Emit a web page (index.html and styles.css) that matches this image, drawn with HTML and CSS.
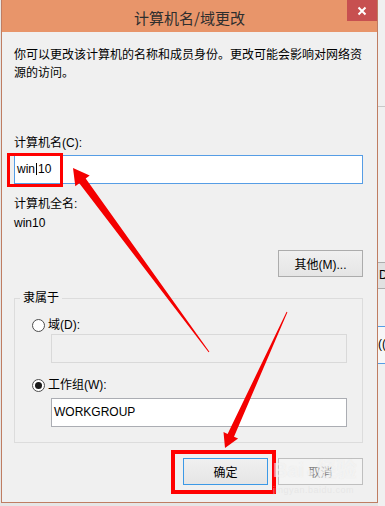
FILE: index.html
```html
<!DOCTYPE html>
<html lang="zh-CN">
<head>
    <meta charset="UTF-8">
    <title>计算机名/域更改</title>
    <link rel="stylesheet" href="styles.css">
</head>
<body>
    <div class="screen">
        <div class="window">
            <div class="titlebar">
                <div class="title">计算机名/域更改</div>
                <button class="close">
                    <svg width="10" height="10" viewBox="0 0 10 10">
                        <path d="M1.5 1.5 L8.5 8.5 M8.5 1.5 L1.5 8.5" stroke="#fff" stroke-width="2" fill="none"/>
                    </svg>
                </button>
            </div>

            <div class="content">
                <p class="intro">你可以更改该计算机的名称和成员身份。更改可能会影响对网络资源的访问。</p>

                <div class="label label-name">计算机名(C):</div>
                <div class="field focused">win<span class="caret"></span>10</div>

                <div class="label label-full">计算机全名:</div>
                <div class="value">win10</div>

                <div class="row-right">
                    <button class="btn">其他(M)...</button>
                </div>

                <fieldset class="group">
                    <legend>隶属于</legend>
                    <div class="radio radio-domain"><span class="dot"></span>域(D):</div>
                    <div class="field disabled"></div>
                    <div class="radio radio-work"><span class="dot checked"></span>工作组(W):</div>
                    <div class="field work">WORKGROUP</div>
                </fieldset>

                <div class="actions">
                    <button class="btn default">确定</button>
                    <button class="btn" disabled>取消</button>
                </div>
            </div>
        </div>

        <div class="side">
            <div class="side-top"></div>
            <div class="side-line"></div>
            <div class="side-gap"></div>
            <div class="side-tab">D</div>
            <div class="side-gap2"></div>
            <div class="side-field">((</div>
        </div>

        <!-- annotations drawn over the dialog -->
        <div class="mark mark-name"></div>
        <div class="mark mark-ok"></div>
        <svg class="arrows" width="385" height="506" viewBox="0 0 385 506">
            <polygon fill="#f40000" points="73,168 89.7,175.6 85.7,178.5 209.4,351.7 208.6,352.3 79.3,183.3 75.3,186.2"/>
            <polygon fill="#f40000" points="225,448 238.1,438.6 234,436.8 287.4,312.2 286.6,311.8 227.6,433.9 223.5,432"/>
        </svg>
        <div class="watermark">
            <div class="wm-logo">Bai<span class="wm-paw">&#9679;</span>经验</div>
            <div class="wm-url">jingyan.baidu.com</div>
        </div>
    </div>
</body>
</html>
```

FILE: styles.css
```css
body {
    margin: 0;
    background: #e6e6e6;
    font-family: "Liberation Sans", "Noto Sans CJK SC", sans-serif;
    font-size: 12px;
    color: #000;
}

.screen {
    position: relative;
    display: flex;
    align-items: flex-start;
    width: 385px;
    height: 506px;
    overflow: hidden;
}

.window {
    margin-left: 1px;
    width: 377px;
    height: 503px;
    box-sizing: border-box;
    border: 1px solid #bf7d62;
    border-top: 0;
    background: #f0f0f0;
    display: flex;
    flex-direction: column;
}

.titlebar {
    height: 32px;
    flex-shrink: 0;
    background: #e8956a;
    display: grid;
    grid-template-columns: 30px 1fr 30px;
}

.title {
    grid-column: 2;
    text-align: center;
    font-family: "Noto Sans CJK SC", sans-serif;
    font-size: 15px;
    line-height: 30px;
    padding-top: 3px;
    color: #2e2e2e;
}

.close {
    grid-column: 3;
    height: 21px;
    border: 0;
    padding: 0;
    background: #c75050;
    display: flex;
    align-items: center;
    justify-content: center;
}

.content {
    padding: 14px 14px 0 12px;
}

.intro {
    margin: 0;
    line-height: 18px;
}

.label {
    line-height: 18px;
}

.label-name {
    margin-top: 52px;
}

.label-full {
    margin-top: 11px;
}

.value {
    margin-top: 1px;
    line-height: 18px;
}

.field {
    height: 29px;
    box-sizing: border-box;
    border: 1px solid #abadb3;
    background: #fff;
    padding-left: 2px;
    line-height: 27px;
}

.field.focused {
    margin-top: 3px;
    border-color: #569de5;
}

.caret {
    display: inline-block;
    width: 1px;
    height: 12px;
    background: #000;
    vertical-align: -2px;
    margin: 0 1px 0 1px;
}

.row-right {
    margin-top: 18px;
    display: flex;
    justify-content: flex-end;
}

.btn {
    width: 85px;
    height: 27px;
    padding: 0;
    font: inherit;
    color: #000;
    border: 1px solid #acacac;
    background: linear-gradient(#f0f0f0, #e5e5e5);
}

.btn.default {
    border-color: #3c99e6;
}

.btn:disabled {
    color: #838383;
    border-color: #bfbfbf;
    background: #f4f4f4;
}

.group {
    margin: 12px 0 0 0;
    padding: 0 0 15px 0;
    border: 1px solid #dcdcdc;
    min-width: 0;
}

.group legend {
    margin-left: 5px;
    padding: 0 3px;
    line-height: 18px;
}

.radio {
    display: flex;
    align-items: center;
    padding-left: 17px;
    line-height: 18px;
}

.radio-domain {
    margin-top: 9px;
}

.radio-work {
    margin-top: 13px;
}

.dot {
    width: 13px;
    height: 13px;
    box-sizing: border-box;
    border: 1px solid #4d4d4d;
    border-radius: 50%;
    background: #fff;
    margin-right: 3px;
    display: flex;
    align-items: center;
    justify-content: center;
}

.dot.checked::after {
    content: "";
    width: 7px;
    height: 7px;
    border-radius: 50%;
    background: #1a1a1a;
}

.group .field {
    margin-left: 36px;
    width: 296px;
}

.field.disabled {
    background: #f0f0f0;
    border-color: #d9d9d9;
}

.field.work {
    margin-top: 4px;
}

.actions {
    margin-top: 15px;
    display: flex;
    justify-content: flex-end;
    gap: 10px;
}

/* background window peeking out on the right */
.side {
    width: 7px;
    display: flex;
    flex-direction: column;
    background: #f0f0f0;
    height: 506px;
    overflow: hidden;
}

.side-top {
    height: 106px;
}

.side-line {
    height: 1px;
    background: #c8c8c8;
}

.side-gap {
    height: 155px;
}

.side-tab {
    height: 25px;
    border-top: 1px solid #adadad;
    border-bottom: 1px solid #adadad;
    background: #e1e1e1;
    line-height: 25px;
    padding-left: 1px;
}

.side-gap2 {
    height: 37px;
}

.side-field {
    height: 36px;
    border-top: 1px solid #569de5;
    border-bottom: 1px solid #569de5;
    background: #f7f7f7;
    line-height: 34px;
    white-space: nowrap;
}

/* red annotation marks */
.mark {
    position: absolute;
    box-sizing: border-box;
    border: 3px solid #f00;
}

.mark-name {
    left: 7px;
    top: 153px;
    width: 56px;
    height: 34px;
}

.mark-ok {
    left: 171px;
    top: 450px;
    width: 105px;
    height: 44px;
    border-width: 4px;
}

.arrows {
    position: absolute;
    left: 0;
    top: 0;
    pointer-events: none;
}

.watermark {
    position: absolute;
    left: 273px;
    top: 457px;
    color: rgba(255, 255, 255, 0.5);
    text-shadow: 0 0 1px rgba(200, 200, 200, 0.35);
    pointer-events: none;
}

.wm-logo {
    font-family: "Liberation Sans", "Noto Sans CJK SC", sans-serif;
    font-weight: bold;
    font-size: 20px;
    line-height: 26px;
}

.wm-paw {
    font-size: 14px;
    margin: 0 2px;
}

.wm-url {
    font-size: 9px;
    line-height: 10px;
    letter-spacing: 0.5px;
    color: rgba(225, 225, 225, 0.6);
    text-shadow: none;
}
```
